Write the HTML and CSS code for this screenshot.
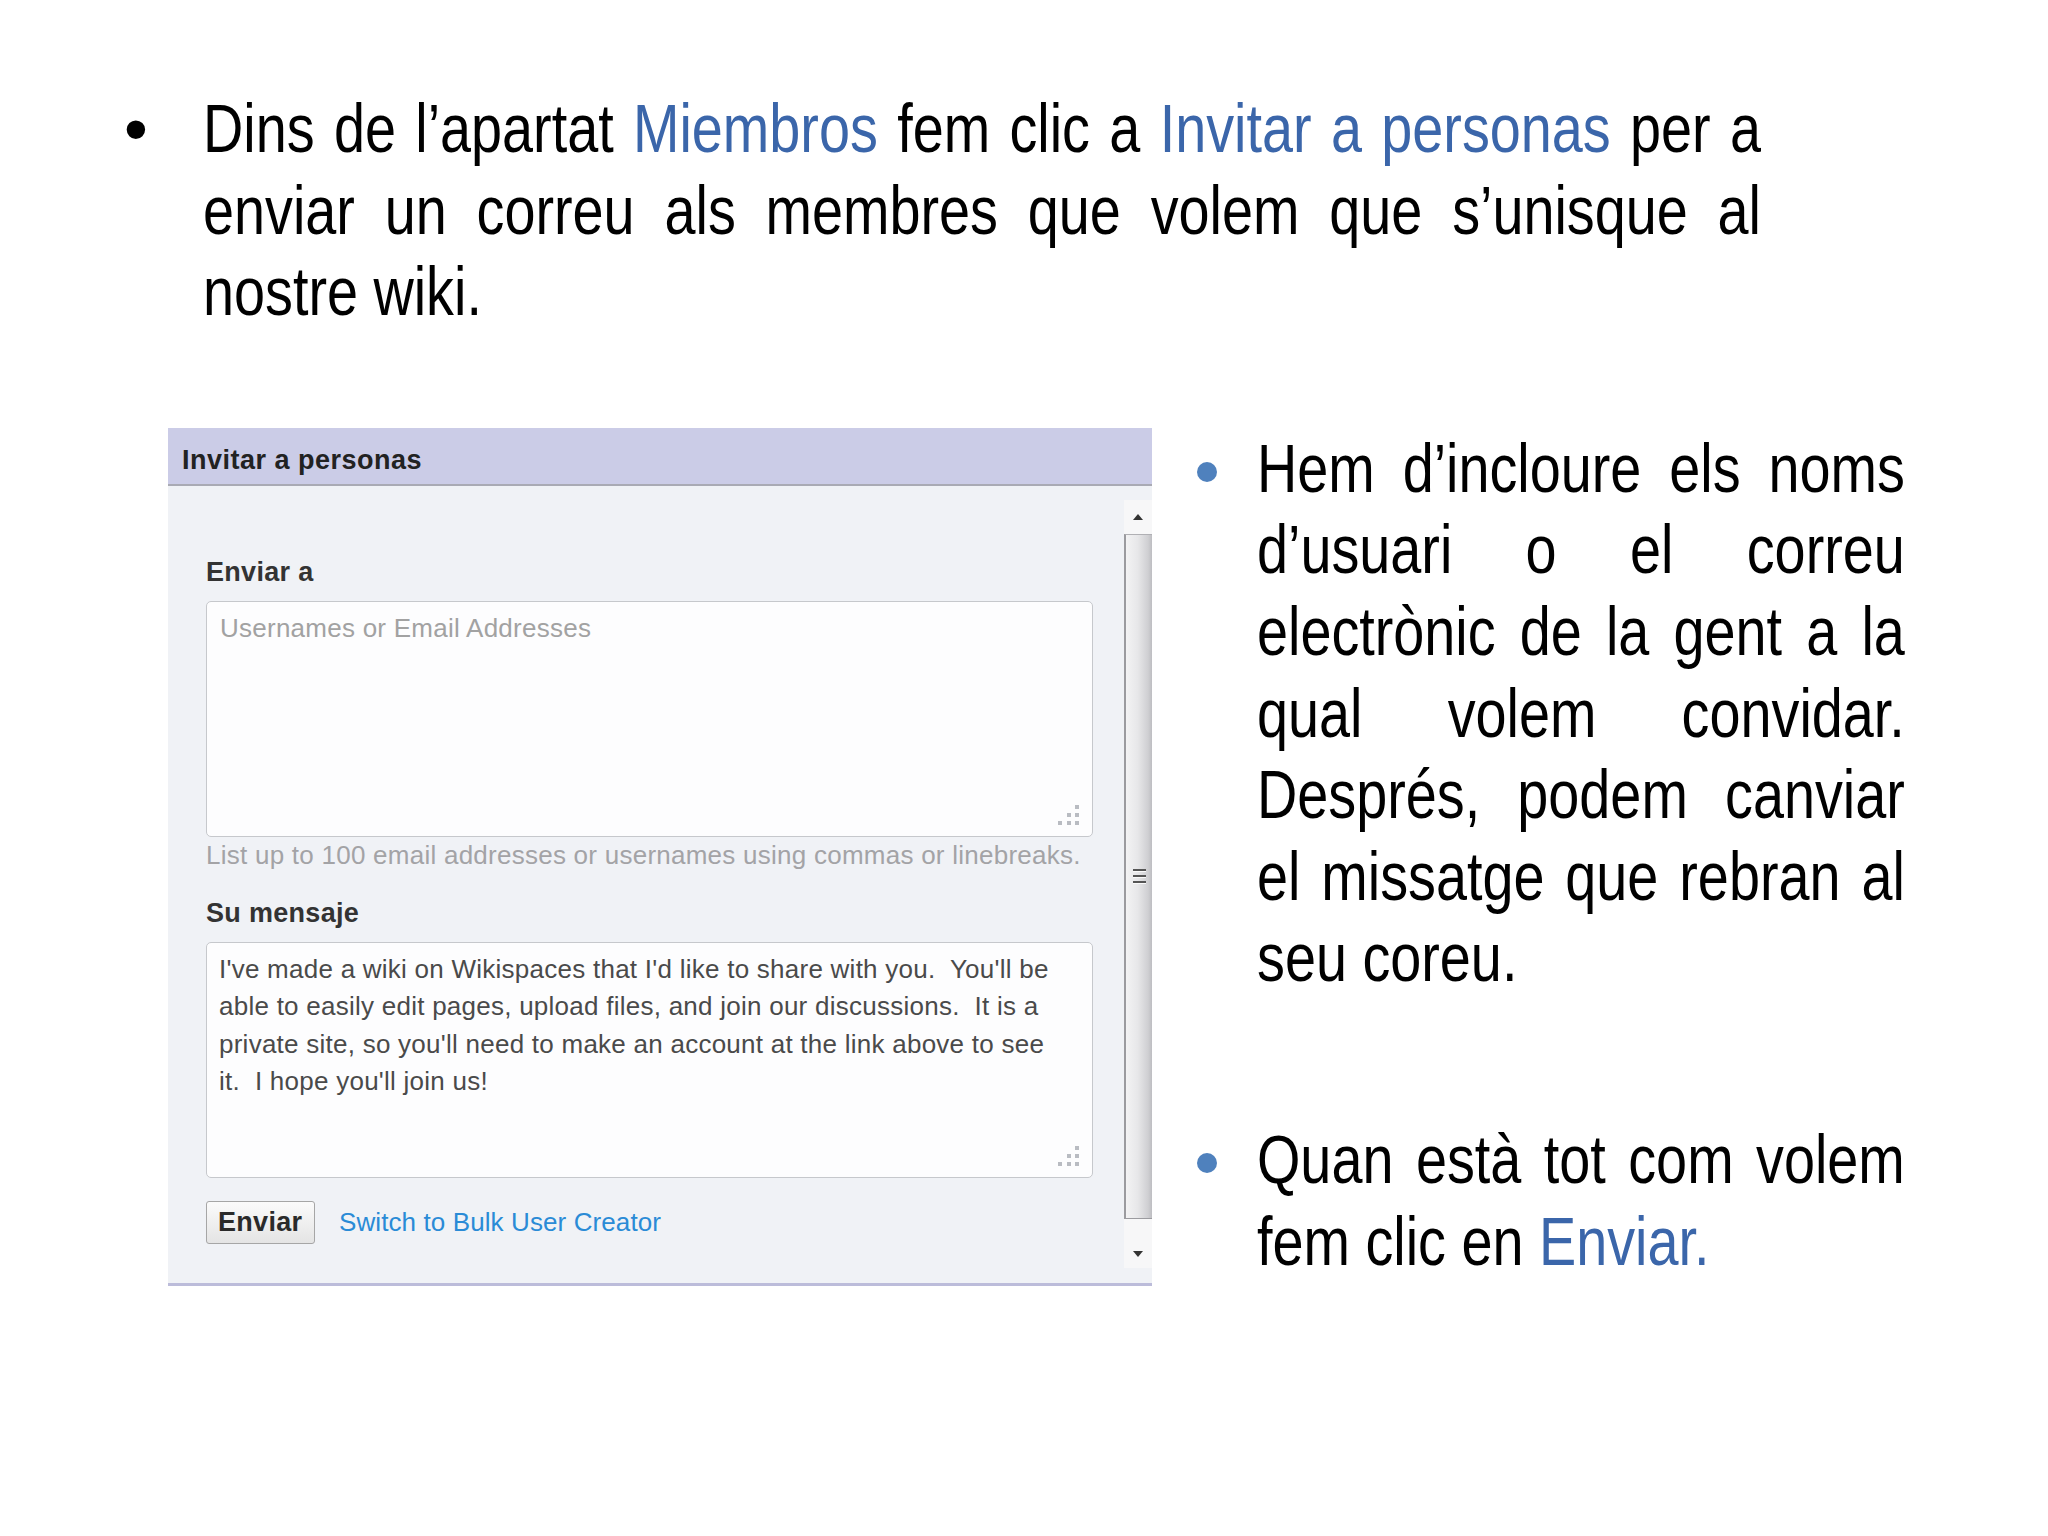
FILE: index.html
```html
<!DOCTYPE html>
<html lang="ca">
<head>
<meta charset="utf-8">
<title>Invitar a personas</title>
<link rel="stylesheet" href="styles.css">
</head>
<body>
<main class="slide">
  <div class="item item-top">
    <span class="bullet">•</span>
    <p class="text text-top">
      <span class="ln j">Dins de l’apartat <span class="hl">Miembros</span> fem clic a <span class="hl">Invitar a personas</span> per a</span>
      <span class="ln j">enviar un correu als membres que volem que s’unisque al</span>
      <span class="ln">nostre wiki.</span>
    </p>
  </div>

  <div class="row">
    <section class="panel">
      <header class="panel-head">Invitar a personas</header>
      <div class="panel-body">
        <form class="form">
          <label class="lbl">Enviar a</label>
          <div class="field">
            <span class="ph">Usernames or Email Addresses</span>
            <svg class="grip" width="24" height="24" viewBox="0 0 24 24"><rect x="19" y="1" width="4" height="4"/><rect x="11" y="9" width="4" height="4"/><rect x="19" y="9" width="4" height="4"/><rect x="2" y="17" width="4" height="4"/><rect x="11" y="17" width="4" height="4"/><rect x="19" y="17" width="4" height="4"/></svg>
          </div>
          <p class="help">List up to 100 email addresses or usernames using commas or linebreaks.</p>
          <label class="lbl lbl-2">Su mensaje</label>
          <div class="field field-msg">
            <span class="mline">I've made a wiki on Wikispaces that I'd like to share with you.&nbsp; You'll be</span>
            <span class="mline">able to easily edit pages, upload files, and join our discussions.&nbsp; It is a</span>
            <span class="mline">private site, so you'll need to make an account at the link above to see</span>
            <span class="mline">it.&nbsp; I hope you'll join us!</span>
            <svg class="grip" width="24" height="24" viewBox="0 0 24 24"><rect x="19" y="1" width="4" height="4"/><rect x="11" y="9" width="4" height="4"/><rect x="19" y="9" width="4" height="4"/><rect x="2" y="17" width="4" height="4"/><rect x="11" y="17" width="4" height="4"/><rect x="19" y="17" width="4" height="4"/></svg>
          </div>
          <div class="actions">
            <button class="btn" type="button">Enviar</button>
            <a class="link">Switch to Bulk User Creator</a>
          </div>
        </form>
        <div class="scrollbar">
          <div class="sb-btn sb-up">
            <svg width="12" height="8" viewBox="0 0 12 8"><path d="M1 7 L6 1 L11 7 Z"/></svg>
          </div>
          <div class="sb-thumb">
            <span class="sb-grip"></span>
            <span class="sb-grip"></span>
            <span class="sb-grip"></span>
          </div>
          <div class="sb-btn sb-down">
            <svg width="12" height="8" viewBox="0 0 12 8"><path d="M1 1 L11 1 L6 7 Z"/></svg>
          </div>
        </div>
      </div>
    </section>

    <div class="right">
      <div class="item">
        <span class="rdot"></span>
        <p class="text text-right">
          <span class="ln j">Hem d’incloure els noms</span>
          <span class="ln j">d’usuari o el correu</span>
          <span class="ln j">electrònic de la gent a la</span>
          <span class="ln j">qual volem convidar.</span>
          <span class="ln j">Després, podem canviar</span>
          <span class="ln j">el missatge que rebran al</span>
          <span class="ln">seu coreu.</span>
        </p>
      </div>
      <div class="item item-b2">
        <span class="rdot"></span>
        <p class="text text-right">
          <span class="ln j">Quan està tot com volem</span>
          <span class="ln">fem clic en <span class="hl">Enviar.</span></span>
        </p>
      </div>
    </div>
  </div>
</main>
</body>
</html>
```

FILE: styles.css
```css
* { box-sizing: border-box; }

html, body {
  margin: 0;
  padding: 0;
  background: #ffffff;
}

body {
  width: 2048px;
  height: 1536px;
  overflow: hidden;
  font-family: "Liberation Sans", Arial, sans-serif;
  color: #000000;
}

.slide {
  padding-top: 88px;
}

.item {
  display: flex;
  align-items: flex-start;
}

.item-top {
  padding-left: 124px;
}

.bullet {
  flex: none;
  width: 79px;
  font-size: 68px;
  line-height: 81.6px;
}

/* Arial Narrow look: Liberation Sans condensed horizontally */
.text {
  flex: none;
  margin: 0;
  font-size: 68px;
  line-height: 81.6px;
  transform: scaleX(0.82);
  transform-origin: 0 0;
}

.text-top { width: 1900px; }

.ln { display: block; }

.j {
  text-align: justify;
  text-align-last: justify;
}

.hl { color: #3b66aa; }

.row {
  display: flex;
  align-items: flex-start;
  margin-top: 95px;
  padding-left: 168px;
}

/* ---------- panel ---------- */
.panel {
  flex: none;
  width: 984px;
}

.panel-head {
  height: 58px;
  padding: 10px 0 0 14px;
  display: flex;
  align-items: center;
  background: #cbcce7;
  border-bottom: 2px solid #a9aab4;
  font-size: 27px;
  font-weight: bold;
  letter-spacing: 0.5px;
  color: #222;
}

.panel-body {
  display: flex;
  height: 800px;
  background: #f0f2f6;
  border-bottom: 3px solid #bcbcda;
}

.form {
  flex: 1;
  padding: 70px 0 0 38px;
}

.lbl {
  display: block;
  font-size: 27px;
  font-weight: bold;
  line-height: 32px;
  color: #333;
  letter-spacing: 0.3px;
}

.lbl-2 { margin-top: 27px; }

.field {
  position: relative;
  width: 887px;
  height: 236px;
  margin-top: 13px;
  background: #fdfdfe;
  border: 1px solid #c6c8cc;
  border-radius: 5px;
  padding: 11px 0 0 13px;
  font-size: 26px;
  line-height: 30px;
  letter-spacing: 0.25px;
}

.ph { color: #a2a2a2; }

.field-msg {
  padding: 8px 0 0 12px;
  line-height: 37.5px;
  color: #4a4a4a;
}

.mline {
  display: block;
  white-space: nowrap;
}

.grip {
  position: absolute;
  right: 12px;
  bottom: 8px;
  fill: #b9bcc2;
}

.help {
  margin: 3px 0 0 0;
  font-size: 26px;
  line-height: 30px;
  letter-spacing: 0.25px;
  color: #a3a3a6;
  white-space: nowrap;
}

.actions {
  display: flex;
  align-items: center;
  gap: 24px;
  margin-top: 23px;
}

.btn {
  width: 109px;
  height: 43px;
  padding: 0 0 0 11px;
  text-align: left;
  border: 1px solid #a6a6a6;
  border-radius: 3px;
  background: linear-gradient(#fbfbfb, #e4e4e4);
  font-family: "Liberation Sans", Arial, sans-serif;
  font-size: 27px;
  font-weight: bold;
  color: #2a2a2a;
  letter-spacing: 0.3px;
}

.link {
  font-size: 26px;
  letter-spacing: 0.1px;
  color: #2a8bd6;
}

/* ---------- scrollbar ---------- */
.scrollbar {
  flex: none;
  width: 28px;
  height: 768px;
  margin-top: 14px;
  display: flex;
  flex-direction: column;
  background: #f7f7f8;
}

.sb-btn {
  display: flex;
  justify-content: center;
  fill: #333;
}

.sb-up {
  height: 34px;
  align-items: center;
}

.sb-down {
  height: 49px;
  align-items: flex-end;
  padding-bottom: 10px;
}

.sb-thumb {
  flex: 1;
  display: flex;
  flex-direction: column;
  justify-content: center;
  align-items: center;
  gap: 4px;
  border-left: 2px solid #9b9b9f;
  border-top: 1px solid #b0b0b4;
  border-bottom: 1px solid #9b9b9f;
  background: linear-gradient(90deg, #f3f3f4 0%, #e7e7e9 45%, #cfcfd2 85%, #bdbdc1 100%);
}

.sb-grip {
  display: block;
  width: 13px;
  height: 2px;
  background: #555;
  box-shadow: 0 1px 0 #fafafa;
}

/* ---------- right column ---------- */
.right {
  flex: none;
  width: 835px;
  margin-left: 45px;
}

.rdot {
  flex: none;
  width: 20px;
  height: 20px;
  margin: 34px 40px 0 0;
  border-radius: 50%;
  background: #4f81bd;
}

.text-right { width: 790px; }

.item-b2 { margin-top: 120px; }
```
